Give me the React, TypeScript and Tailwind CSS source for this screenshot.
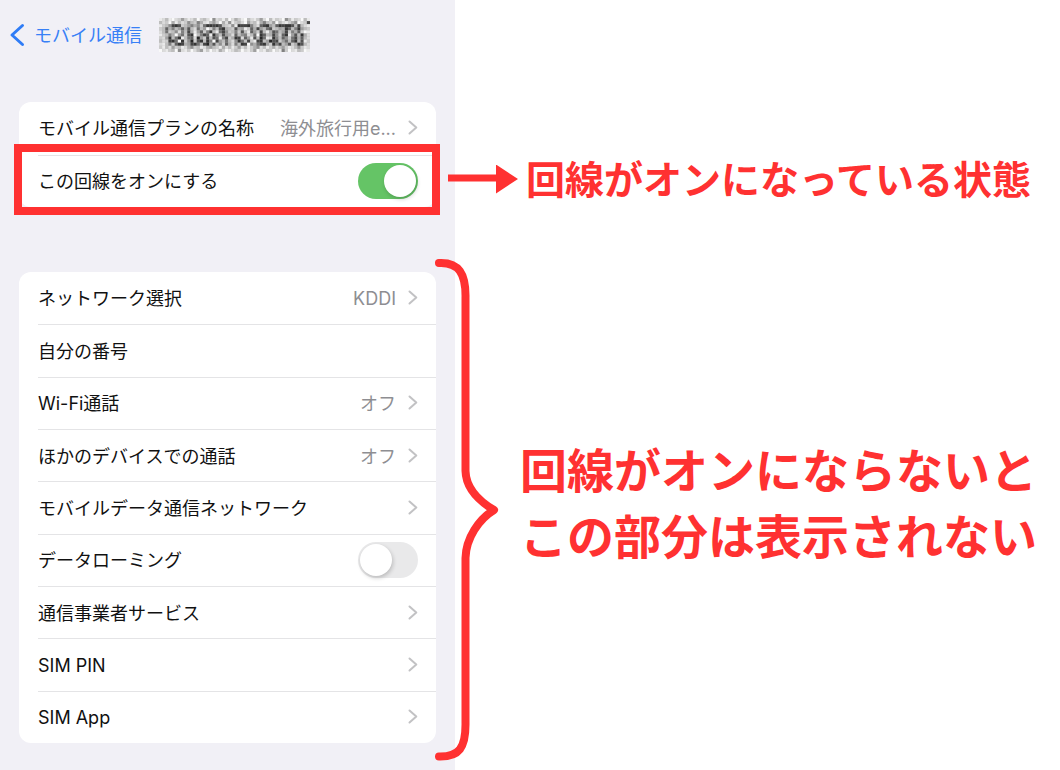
import { useState } from "react";
import type { ReactNode } from "react";

type Item = {
  label: string;
  value?: string;
  kind?: "link" | "text" | "switch";
};

const items: Item[] = [
  { label: "ネットワーク選択", value: "KDDI" },
  { label: "自分の番号", kind: "text" },
  { label: "Wi-Fi通話", value: "オフ" },
  { label: "ほかのデバイスでの通話", value: "オフ" },
  { label: "モバイルデータ通信ネットワーク" },
  { label: "データローミング", kind: "switch" },
  { label: "通信事業者サービス" },
  { label: "SIM PIN" },
  { label: "SIM App" },
];

// gray level of each cell, 0 = black, f = white
const MOSAIC = [
  "edbefdc9cedbfcbdf8dcebfdacefbdec9dfbecdf8becdfbe",
  "bdcfaebdc8bc7adeb9cfad8ecbdf9cbea7bc9fbdeca8fdc3",
  "ecb8324cb97a8c622324bcd8e23327bd5329b523224b3bde",
  "cb5a7b95a4bd6b9fc7b42abc4a9ec5a39b64cb9a25b729bc",
  "db6cb8d7b3ae95c72be638cb7c4be59c3bea46b93c7a5cfe",
  "ecb7af96c42fb735e28b49ad5b87db6f25ba38c52e94b2ad",
  "cd92b62eb65d19c3b46e73ca23d59e4b16ed27b58c63a5bd",
  "bdc326f2c81c42b27f39b6bd826b3ce32b9143c96b52b4ec",
  "deb7c523a9326b3194b8c5ad7b23f8a6329c273b94ca24bd",
  "cebd9cbeda8cbeda9bceadbec9dbeca8dbecadb9cedb8ced",
  "fdecbf8decfdb9ecfdeacfedbcfdec9fdebcfde7cfdebcfe",
];

function Mosaic() {
  return (
    <svg
      className="h-[34px] w-[151px]"
      viewBox="0 0 48 11"
      preserveAspectRatio="none"
      aria-hidden="true"
    >
      <rect width={48} height={11} fill="#b4b4b4" />
      {MOSAIC.map((row, y) =>
        row.split("").map((c, x) => {
          const v = 24 + parseInt(c, 16) * 15;
          return <rect key={`${x}-${y}`} x={x} y={y} width={1} height={1} fill={`rgb(${v},${v},${v})`} />;
        })
      )}
    </svg>
  );
}

function Chevron() {
  return (
    <svg className="h-4 w-[10px] shrink-0" viewBox="0 0 10 16" fill="none" aria-hidden="true">
      <path
        d="M1.5 1.500 8.300 7.500l-6.800 6"
        stroke="#c2c2c4"
        strokeWidth="2"
        strokeLinecap="round"
        strokeLinejoin="round"
      />
    </svg>
  );
}

function Card({ children, className }: { children: ReactNode; className: string }) {
  return (
    <ul className={`grid auto-rows-fr rounded-xl bg-white pl-[19px] ${className}`}>
      {children}
    </ul>
  );
}

function Row({ item, on, onToggle }: { item: Item; on?: boolean; onToggle?: (v: boolean) => void }) {
  const rowClass = "flex h-full items-center justify-between pr-[18px]";

  if (item.kind === "switch") {
    return (
      <label className={rowClass}>
        <span className="pt-0.5">{item.label}</span>
        <input
          type="checkbox"
          role="switch"
          checked={on}
          onChange={(e) => onToggle?.(e.target.checked)}
          className="flex h-9 w-[60px] cursor-pointer appearance-none items-center rounded-full bg-[#e9e9ea] px-[2px] before:block before:h-8 before:w-8 before:rounded-full before:bg-white before:shadow-[1px_2px_4px_rgba(0,0,0,0.2)] checked:justify-end checked:bg-[#65c466]"
        />
      </label>
    );
  }

  if (item.kind === "text") {
    return (
      <div className={rowClass}>
        <span className="pt-0.5">{item.label}</span>
      </div>
    );
  }

  return (
    <a href="#" className={rowClass}>
      <span className="pt-0.5">{item.label}</span>
      <span className="flex items-center gap-3 text-[#8e8e92]">
        <span className="pt-0.5">{item.value}</span>
        <Chevron />
      </span>
    </a>
  );
}

export default function App() {
  const [lineOn, setLineOn] = useState(true);
  const [roaming, setRoaming] = useState(false);

  return (
    <div className="flex min-h-screen bg-white font-['Inter','Noto_Sans_CJK_JP',sans-serif] text-[18px] leading-6 text-[#111]">
      {/* ===== iPhone settings ===== */}
      <main className="w-[455px] shrink-0 bg-[#f1f0f6] pr-[19px] pb-[27px] pl-[19px]">
        <header className="-ml-[10px] flex h-[70px] items-center gap-[17px]">
          <a href="#" className="flex items-center gap-[9px] text-[#3880f6]">
            <svg className="h-6 w-4" viewBox="0 0 16 24" fill="none" aria-hidden="true">
              <path
                d="M13.5 2.5 3 12l10.500 9.500"
                stroke="#2f7cf6"
                strokeWidth="3"
                strokeLinecap="round"
                strokeLinejoin="round"
              />
            </svg>
            <span className="pt-0.5">モバイル通信</span>
          </a>
          <Mosaic />
        </header>

        <Card className="mt-8 min-h-[105px]">
          <li>
            <Row item={{ label: "モバイル通信プランの名称", value: "海外旅行用e..." }} />
          </li>
          <li className="relative border-t border-[#e4e4e6]">
            <Row item={{ label: "この回線をオンにする", kind: "switch" }} on={lineOn} onToggle={setLineOn} />
            <div className="pointer-events-none absolute -top-3 -right-1 -bottom-2 -left-6 border-8 border-[#ff3131]" />
          </li>
        </Card>

        <Card className="mt-[65px] min-h-[471px]">
          {items.map((item, i) => (
            <li key={item.label} className={i > 0 ? "border-t border-[#e4e4e6]" : ""}>
              <Row item={item} on={roaming} onToggle={setRoaming} />
            </li>
          ))}
        </Card>
      </main>

      {/* ===== annotations ===== */}
      <aside className="flex-1 font-bold whitespace-nowrap text-[#ff3131]">
        <div className="-ml-2 flex items-center gap-2 pt-[150px]">
          <svg className="relative h-[30px] w-[71px] shrink-0" viewBox="0 0 71 30" fill="#ff3131" aria-hidden="true">
            <path d="M1 9.500h48V-.5l22 14.500L49 28.500V16.500H1z" />
          </svg>
          <p className="text-[39px] leading-[60px]">回線がオンになっている状態</p>
        </div>

        <div className="-ml-5 mt-12 flex items-center gap-5">
          <svg className="relative h-[504px] w-[65px] shrink-0" viewBox="0 0 65 504" fill="none" aria-hidden="true">
            <path
              d="M4 5C24 4 31 16 30.500 40V213C31 231 44 243 59 252C44 261 31 280 30.500 300V464C31 490 24 499 4 498.500"
              stroke="#ff3131"
              strokeWidth="8"
              strokeLinecap="round"
              strokeLinejoin="round"
            />
          </svg>
          <p className="pb-3 text-[47px] leading-[66px]">
            回線がオンにならないと
            <br />
            この部分は表示されない
          </p>
        </div>
      </aside>
    </div>
  );
}
